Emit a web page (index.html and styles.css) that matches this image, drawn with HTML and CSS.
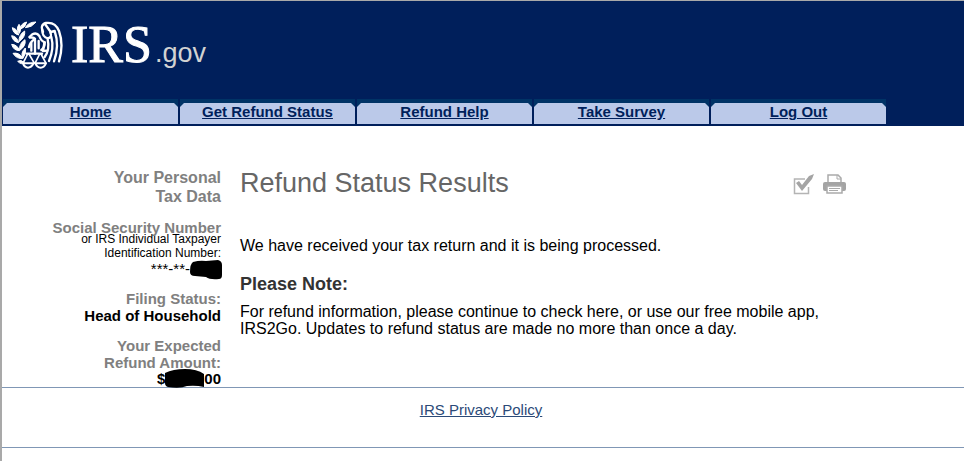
FILE: index.html
```html
<!DOCTYPE html>
<html lang="en">
<head>
<meta charset="utf-8">
<meta name="viewport" content="width=device-width, initial-scale=1">
<title>Refund Status Results</title>
<link rel="stylesheet" href="styles.css">
</head>
<body>
<header class="header">
  <div class="brand">
    <svg class="seal" viewBox="18 18 156 144" aria-hidden="true">
      <g fill="#fff" stroke="#fff" stroke-width="3" stroke-linejoin="round">
        <path d="M22 38Q38 42 41 60Q24 56 22 38Z"/>
        <path d="M42 28Q52 38 43 55Q32 42 42 28Z"/>
        <path d="M65 21Q62 37 47 42Q47 25 65 21Z"/>
        <path d="M93 21Q80 38 61 38Q70 21 93 21Z"/>
        <path d="M20 62Q36 64 41 83Q23 80 20 62Z"/>
        <path d="M59 48Q62 66 42 80Q41 59 59 48Z"/>
        <path d="M20 88Q37 89 44 107Q25 107 20 88Z"/>
        <path d="M60 74Q64 93 44 106Q41 86 60 74Z"/>
        <path d="M24 115Q42 111 54 130Q35 133 24 115Z"/>
        <path d="M61 99Q65 115 54 129Q45 115 61 99Z"/>
        <path d="M38 139Q48 132 58 143Q50 151 38 139Z"/>
      </g>
      <g fill="none" stroke="#fff" stroke-width="7" stroke-linecap="round" stroke-linejoin="round">
        <path d="M73 66L82 58Q95 51 103 63Q108 78 119 82"/>
        <path d="M75 68Q86 66 90 71Q75 81 72 96"/>
        <path d="M119 82Q120 97 109 105"/>
        <path d="M90 74V116M101 78V100M79 85V107"/>
        <path d="M65 116H111"/>
        <path d="M68 117L55 143M72 117L87 143M104 117L91 143M108 117L122 143" stroke-width="5"/>
        <path d="M54 145H86Q79 158 69 158Q58 157 54 145ZM91 145H123Q117 158 107 158Q96 157 91 145Z" stroke-width="6"/>
        <path d="M114 51Q104 29 123 24Q151 20 162 48Q177 90 162 139"/>
        <path d="M120 27L137 51L149 48Q164 92 147 139"/>
        <path d="M112 44Q111 67 129 70Q143 66 136 53"/>
        <path d="M128 73Q135 104 119 126M139 66Q148 100 132 138"/>
        <path d="M118 84L114 108L127 107"/>
      </g>
    </svg>
    <span class="brand-name">IRS</span><span class="brand-suffix">.gov</span>
  </div>
  <nav class="tabs" aria-label="Main">
    <a class="tab" href="#"><span class="tab-label">Home</span></a>
    <a class="tab" href="#"><span class="tab-label">Get Refund Status</span></a>
    <a class="tab" href="#"><span class="tab-label">Refund Help</span></a>
    <a class="tab" href="#"><span class="tab-label">Take Survey</span></a>
    <a class="tab" href="#"><span class="tab-label">Log Out</span></a>
  </nav>
</header>
<div class="layout">
  <aside class="sidebar">
    <h2 class="side-title">Your Personal<br>Tax Data</h2>
    <dl class="facts">
      <div class="fact fact-id">
        <dt><span class="id-label">Social Security Number</span><span class="id-note">or IRS Individual Taxpayer<br>Identification Number:</span></dt>
        <dd class="id-value">***-**-<svg class="mask" width="32" height="20" viewBox="0 0 32 20" aria-hidden="true"><path d="M3 2Q10 0 16 1L28 0Q32 1 32 5V15Q32 19 29 19Q20 20 16 17L5 16Q0 16 0 12Q0 4 3 2Z"/></svg></dd>
      </div>
      <div class="fact">
        <dt>Filing Status:</dt>
        <dd>Head of Household</dd>
      </div>
      <div class="fact">
        <dt>Your Expected<br>Refund Amount:</dt>
        <dd class="amount">$<svg class="mask" width="39" height="19" viewBox="0 0 39 19" aria-hidden="true"><path d="M0 4Q8 0 20 0Q32 0 39 5V18Q31 16 22 17Q15 20 3 18Q0 17 0 14Z"/></svg>00</dd>
      </div>
    </dl>
  </aside>
  <main class="content">
    <div class="title-row">
      <h1 class="title">Refund Status Results</h1>
      <div class="tools">
        <button class="tool" type="button" aria-label="Take survey">
          <svg width="21" height="22" viewBox="0 0 21 22" aria-hidden="true"><path d="M12 5H1.500V19.500H15.500V13" fill="none" stroke="#b4b4b4" stroke-width="1.500"/><path d="M3 9L6 7L9 11L16 2L21 0L19 5L9 17Z" fill="#a4a4a4"/></svg>
        </button>
        <button class="tool" type="button" aria-label="Print">
          <svg width="23" height="22" viewBox="0 0 23 22" aria-hidden="true"><path d="M5 9V1H15L18 4V9" fill="#fff" stroke="#aaa" stroke-width="1.500"/><path d="M14 1V5H18" fill="none" stroke="#aaa"/><rect y="8" width="23" height="9" rx="2" fill="#a4a4a4"/><rect x="4" y="12" width="15" height="7" fill="#fff" stroke="#aaa" stroke-width="1.500"/><path d="M6 14.500H17M6 16.500H15" stroke="#aaa"/></svg>
        </button>
      </div>
    </div>
    <p class="text">We have received your tax return and it is being processed.</p>
    <h2 class="note-title">Please Note:</h2>
    <p class="text">For refund information, please continue to check here, or use our free mobile app, IRS2Go. Updates to refund status are made no more than once a day.</p>
  </main>
</div>
<footer class="footer"><a href="#">IRS Privacy Policy</a></footer>
</body>
</html>
```
FILE: styles.css
```css
* {
  box-sizing: border-box;
}

html {
  min-height: 100%;
  border-left: 2px solid #a9a9a9;
  border-top: 1px solid #a9a9a9;
  background: #fff;
}

body,
h1,
h2,
p,
dl,
dd {
  margin: 0;
}

body {
  font-family: "Liberation Sans", Arial, sans-serif;
  font-size: 16px;
  line-height: 17px;
  color: #000;
}

.header {
  background: #001f5b;
  padding-bottom: 2px;
}

.brand {
  display: flex;
  align-items: baseline;
  height: 98px;
  padding: 14px 0 0 9px;
  color: #fff;
}

.seal {
  width: 52px;
  height: 48px;
  align-self: flex-start;
  margin-top: 6px;
}

.brand-name {
  margin-left: 8px;
  font-family: "Liberation Serif", "Times New Roman", serif;
  font-size: 52px;
  line-height: 60px;
  -webkit-text-stroke: 1px #fff;
}

.brand-suffix {
  margin-left: 3px;
  font-size: 27px;
  color: #d2d2d2;
}

.tabs {
  display: grid;
  grid-template-columns: repeat(5, minmax(0, 175px));
  gap: 2px;
  padding-left: 1px;
}

.tab {
  padding-top: 4px;
  background: #003366;
  color: #001f5b;
  font-size: 15px;
  font-weight: bold;
  text-align: center;
}

.tab-label {
  display: block;
  height: 21px;
  line-height: 18px;
  background: #bbc9e9;
  clip-path: polygon(4px 0, calc(100% - 4px) 0, 100% 4px, 100% 100%, 0 100%, 0 4px);
}

.layout {
  display: grid;
  grid-template-columns: 219px minmax(0, 1fr);
  column-gap: 19px;
  padding-top: 42px;
}

.sidebar {
  padding-bottom: 1px;
  text-align: right;
}

.side-title {
  margin-bottom: 18px;
  font-size: 16px;
  line-height: 19px;
  color: #808080;
}

.fact {
  margin-bottom: 13px;
  font-size: 15px;
  font-weight: bold;
}

.fact:last-child {
  margin-bottom: 0;
}

.fact dt {
  color: #808080;
}

.id-label {
  display: block;
  line-height: 8px;
}

.id-note {
  display: block;
  position: relative;
  font-size: 12px;
  font-weight: normal;
  line-height: 14px;
  color: #000;
}

.id-value,
.amount {
  display: flex;
  justify-content: flex-end;
  height: 17px;
}

.id-value {
  font-weight: normal;
}

.amount {
  height: 15px;
  line-height: 15px;
}

.mask {
  flex: none;
}

.id-value .mask {
  margin-right: -1px;
}

.amount .mask {
  margin-top: -2px;
}

.title-row {
  display: flex;
  justify-content: space-between;
  max-width: 606px;
  margin-bottom: 38px;
}

.title {
  font-size: 27px;
  font-weight: normal;
  line-height: 31px;
  color: #666;
}

.tools {
  display: flex;
  gap: 9px;
  padding-top: 6px;
}

.tool {
  display: flex;
  align-self: flex-start;
  padding: 0;
  border: 0;
  background: none;
}

.text {
  max-width: 606px;
}

.note-title {
  margin: 20px 0 9px;
  font-size: 18px;
  line-height: 20px;
  color: #333;
}

.footer {
  height: 61px;
  padding: 13px 4px 0 0;
  border-top: 1px solid #8097b5;
  border-bottom: 1px solid #8097b5;
  text-align: center;
  font-size: 15px;
}

.footer a {
  color: #2b4a78;
}
```
